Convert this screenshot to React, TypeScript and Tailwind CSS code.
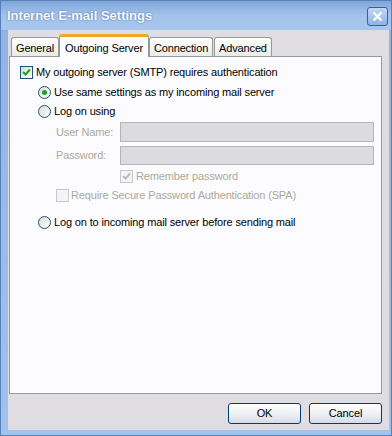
import React from 'react';

const Check = ({ disabled }: { disabled?: boolean }) => (
  <svg width="9" height="9" viewBox="0 0 9 9" className="block">
    <path d="M1 4 L3.5 6.5 L8 1.5" fill="none" stroke={disabled ? '#bcbcbc' : '#21a121'} strokeWidth="2" />
  </svg>
);

const CheckBox = ({ checked, disabled }: { checked?: boolean; disabled?: boolean }) => (
  <span
    className={`flex items-center justify-center w-[13px] h-[13px] border shrink-0 ${
      disabled ? 'border-[#c8c8c8] bg-[#f4f4f6]' : 'border-[#1c5180] bg-gradient-to-br from-[#dcdcd6] to-white'
    }`}
  >
    {checked && <Check disabled={disabled} />}
  </span>
);

const Radio = ({ checked }: { checked?: boolean }) => (
  <span className="flex items-center justify-center w-[13px] h-[13px] rounded-full border border-[#1c5180] bg-gradient-to-br from-[#dcdcd6] to-white shrink-0">
    {checked && <span className="w-[5px] h-[5px] rounded-full bg-[#21a121]" />}
  </span>
);

const Tab = ({ label, active }: { label: string; active?: boolean }) =>
  active ? (
    <div className="relative -mb-px z-10 h-[23px] px-[5px] pt-[3px] bg-[#fcfcfe] border border-b-0 border-[#919b9c] rounded-t-[3px] border-t-[3px] border-t-[#f5a623]">
      {label}
    </div>
  ) : (
    <div className="h-[19px] mt-[3px] px-[4px] pt-[2px] bg-gradient-to-b from-white to-[#ecebe6] border border-b-0 border-[#919b9c] rounded-t-[3px]">
      {label}
    </div>
  );

const Button = ({ label }: { label: string }) => (
  <button className="w-[73px] h-[21px] rounded-[3px] border border-[#003c74] bg-gradient-to-b from-white via-[#eef0f4] to-[#d6dbe6] text-black">
    {label}
  </button>
);

export default function App() {
  return (
    <div className="w-[392px] h-[436px] bg-gradient-to-b from-[#8fb4e4] to-[#9ec3ef] border border-[#5b7fb8] text-[11px] tracking-[-0.15px] text-black font-['Liberation_Sans',sans-serif] flex flex-col overflow-hidden">
      <div className="h-[29px] flex items-center justify-between pl-[6px] pr-[3px] bg-gradient-to-b from-[#7fa6da] via-[#a3c3ec] to-[#a6c6ee]">
        <span className="text-[13px] font-bold tracking-normal text-[#f4f7fb] [text-shadow:0_0_2px_#4d6c98]">Internet E-mail Settings</span>
        <span className="w-[21px] h-[19px] rounded-[3px] border border-[#3b5f98] bg-gradient-to-b from-[#c2d8f4] to-[#8fb3e3] flex items-center justify-center mt-[2px]">
          <svg width="11" height="11" viewBox="0 0 11 11">
            <path d="M1.5 1.5 L9.5 9.5 M9.5 1.5 L1.5 9.5" stroke="white" strokeWidth="2.2" />
          </svg>
        </span>
      </div>
      <div className="flex-1 ml-[7px] mr-[2px] mb-[5px] bg-[#dfdde2] flex flex-col pl-[1px] pr-[7px] pt-[4px]">
        <div className="flex pl-[2px] items-end">
          <Tab label="General" />
          <Tab label="Outgoing Server" active />
          <Tab label="Connection" />
          <div className="w-px" />
          <Tab label="Advanced" />
        </div>
        <div className="h-[338px] bg-[#fcfcfe] border border-[#919b9c] pl-[10px] pt-[9px]">
          <div className="flex items-center gap-[3px] h-[13px]">
            <CheckBox checked />
            <span>My outgoing server (SMTP) requires authentication</span>
          </div>
          <div className="pl-[18px]">
            <div className="flex items-center gap-[3px] h-[13px] mt-[7px]">
              <Radio checked />
              <span>Use same settings as my incoming mail server</span>
            </div>
            <div className="flex items-center gap-[3px] h-[13px] mt-[6px]">
              <Radio />
              <span>Log on using</span>
            </div>
            <div className="pl-[18px] text-[#aca899]">
              <div className="flex items-center h-[20px] mt-[4px]">
                <span className="w-[64px]">User Name:</span>
                <div className="w-[254px] h-[20px] bg-[#dcdbe0] border border-[#b5b5b5]" />
              </div>
              <div className="flex items-center h-[19px] mt-[4px]">
                <span className="w-[64px]">Password:</span>
                <div className="w-[254px] h-[19px] bg-[#dcdbe0] border border-[#b5b5b5]" />
              </div>
              <div className="flex items-center gap-[3px] h-[13px] mt-[5px] pl-[64px]">
                <CheckBox checked disabled />
                <span>Remember password</span>
              </div>
              <div className="flex items-center gap-[2px] h-[13px] mt-[6px]">
                <CheckBox disabled />
                <span>Require Secure Password Authentication (SPA)</span>
              </div>
            </div>
            <div className="flex items-center gap-[3px] h-[13px] mt-[14px]">
              <Radio />
              <span>Log on to incoming mail server before sending mail</span>
            </div>
          </div>
        </div>
        <div className="flex justify-end gap-[8px] mt-[9px]">
          <Button label="OK" />
          <Button label="Cancel" />
        </div>
      </div>
    </div>
  );
}
